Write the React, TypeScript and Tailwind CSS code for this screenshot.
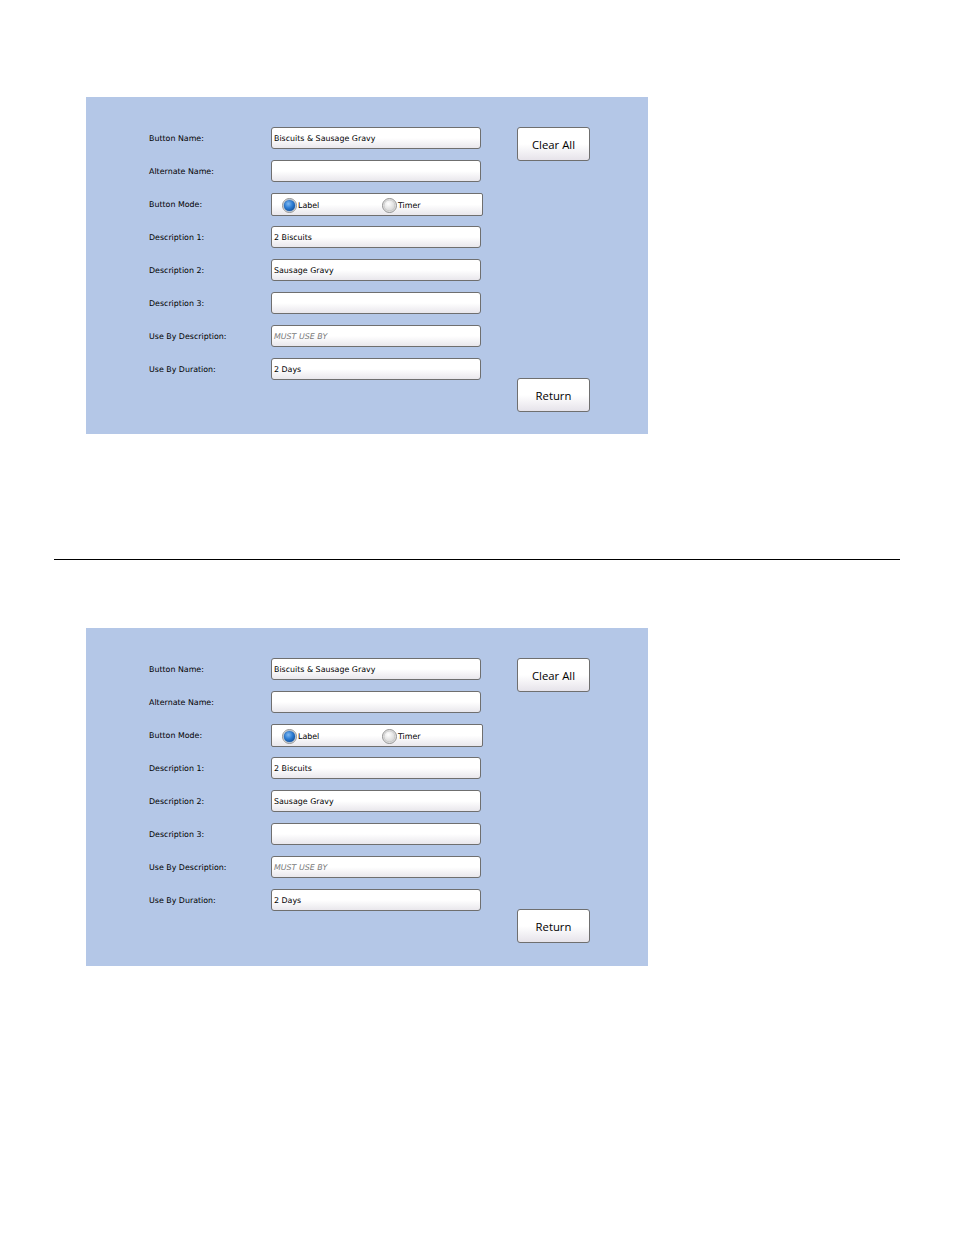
import React from "react";

type Row = {
  label: string;
  value?: string;
  placeholder?: boolean;
  radio?: boolean;
};

const rows: Row[] = [
  { label: "Button Name:", value: "Biscuits & Sausage Gravy" },
  { label: "Alternate Name:", value: "" },
  { label: "Button Mode:", radio: true },
  { label: "Description 1:", value: "2 Biscuits" },
  { label: "Description 2:", value: "Sausage Gravy" },
  { label: "Description 3:", value: "" },
  { label: "Use By Description:", value: "MUST USE BY", placeholder: true },
  { label: "Use By Duration:", value: "2 Days" },
];

const fieldFont = { fontFamily: "Tahoma, 'DejaVu Sans', Verdana, sans-serif" };

function RadioDot({ checked }: { checked: boolean }) {
  return (
    <svg width="15" height="15" viewBox="0 0 15 15" className="shrink-0">
      <defs>
        <radialGradient id="blueFill" cx="40%" cy="35%" r="65%">
          <stop offset="0%" stopColor="#7fb8f0" />
          <stop offset="55%" stopColor="#2f7fd6" />
          <stop offset="100%" stopColor="#1457a8" />
        </radialGradient>
        <radialGradient id="grayFill" cx="40%" cy="35%" r="65%">
          <stop offset="0%" stopColor="#ffffff" />
          <stop offset="100%" stopColor="#d6d6d6" />
        </radialGradient>
      </defs>
      <circle cx="7.5" cy="7.5" r="7" fill="#f2f2f2" stroke="#8f8f8f" strokeWidth="1" />
      <circle cx="7.5" cy="7.5" r="5.6" fill={checked ? "url(#blueFill)" : "url(#grayFill)"} stroke={checked ? "#2a5f9e" : "#b0b0b0"} strokeWidth="0.6" />
    </svg>
  );
}

function TextField({ value, placeholder }: { value?: string; placeholder?: boolean }) {
  return (
    <div
      className="flex h-[22px] w-[210px] items-center rounded-[3px] border border-[#6f6f6f] bg-gradient-to-b from-white via-white to-[#e9e7ec] pl-[2px] pt-[2px] text-[7.9px] leading-none"
      style={fieldFont}
    >
      <span className={placeholder ? "italic text-[#7a7a7a]" : "text-black"}>{value}</span>
    </div>
  );
}

function ModeField() {
  return (
    <div
      className="flex h-[23px] w-[212px] items-center rounded-[2px] border border-[#6f6f6f] bg-gradient-to-b from-white via-white to-[#e9e7ec] pl-[10px] pt-[2px] text-[7.9px] leading-none text-black"
      style={fieldFont}
    >
      <div className="flex w-[100px] items-center">
        <RadioDot checked />
        <span className="ml-px">Label</span>
      </div>
      <div className="flex items-center">
        <RadioDot checked={false} />
        <span className="ml-px">Timer</span>
      </div>
    </div>
  );
}

function PanelButton({ label }: { label: string }) {
  return (
    <button
      className="h-[34px] w-[73px] rounded-[3px] border border-[#6f6f6f] bg-gradient-to-b from-white via-white to-[#e6e3ea] pt-[2px] text-[11.3px] text-black"
      style={{ fontFamily: "'Open Sans', 'DejaVu Sans', sans-serif" }}
    >
      {label}
    </button>
  );
}

function EditPanel({ tall = false }: { tall?: boolean }) {
  return (
    <div className={`ml-[86px] flex w-[562px] bg-[#b4c7e7] pt-[30px] ${tall ? "h-[338px]" : "h-[337px]"}`}>
      <div className="flex flex-col pl-[63px]">
        {rows.map((row) => (
          <div key={row.label} className="flex h-[33px] items-start">
            <div
              className="flex h-[22px] w-[122px] items-center pt-[2px] text-[7.9px] text-black"
              style={fieldFont}
            >
              {row.label}
            </div>
            {row.radio ? <ModeField /> : <TextField value={row.value} placeholder={row.placeholder} />}
          </div>
        ))}
      </div>
      <div className="ml-[34px] flex h-[285px] flex-col justify-between">
        <PanelButton label="Clear All" />
        <PanelButton label="Return" />
      </div>
    </div>
  );
}

export default function App() {
  return (
    <div className="min-h-[1235px] w-[954px] bg-white pt-[97px]">
      <EditPanel />
      <div className="ml-[54px] mt-[125px] h-px w-[846px] bg-black" />
      <div className="mt-[68px]">
        <EditPanel tall />
      </div>
    </div>
  );
}
